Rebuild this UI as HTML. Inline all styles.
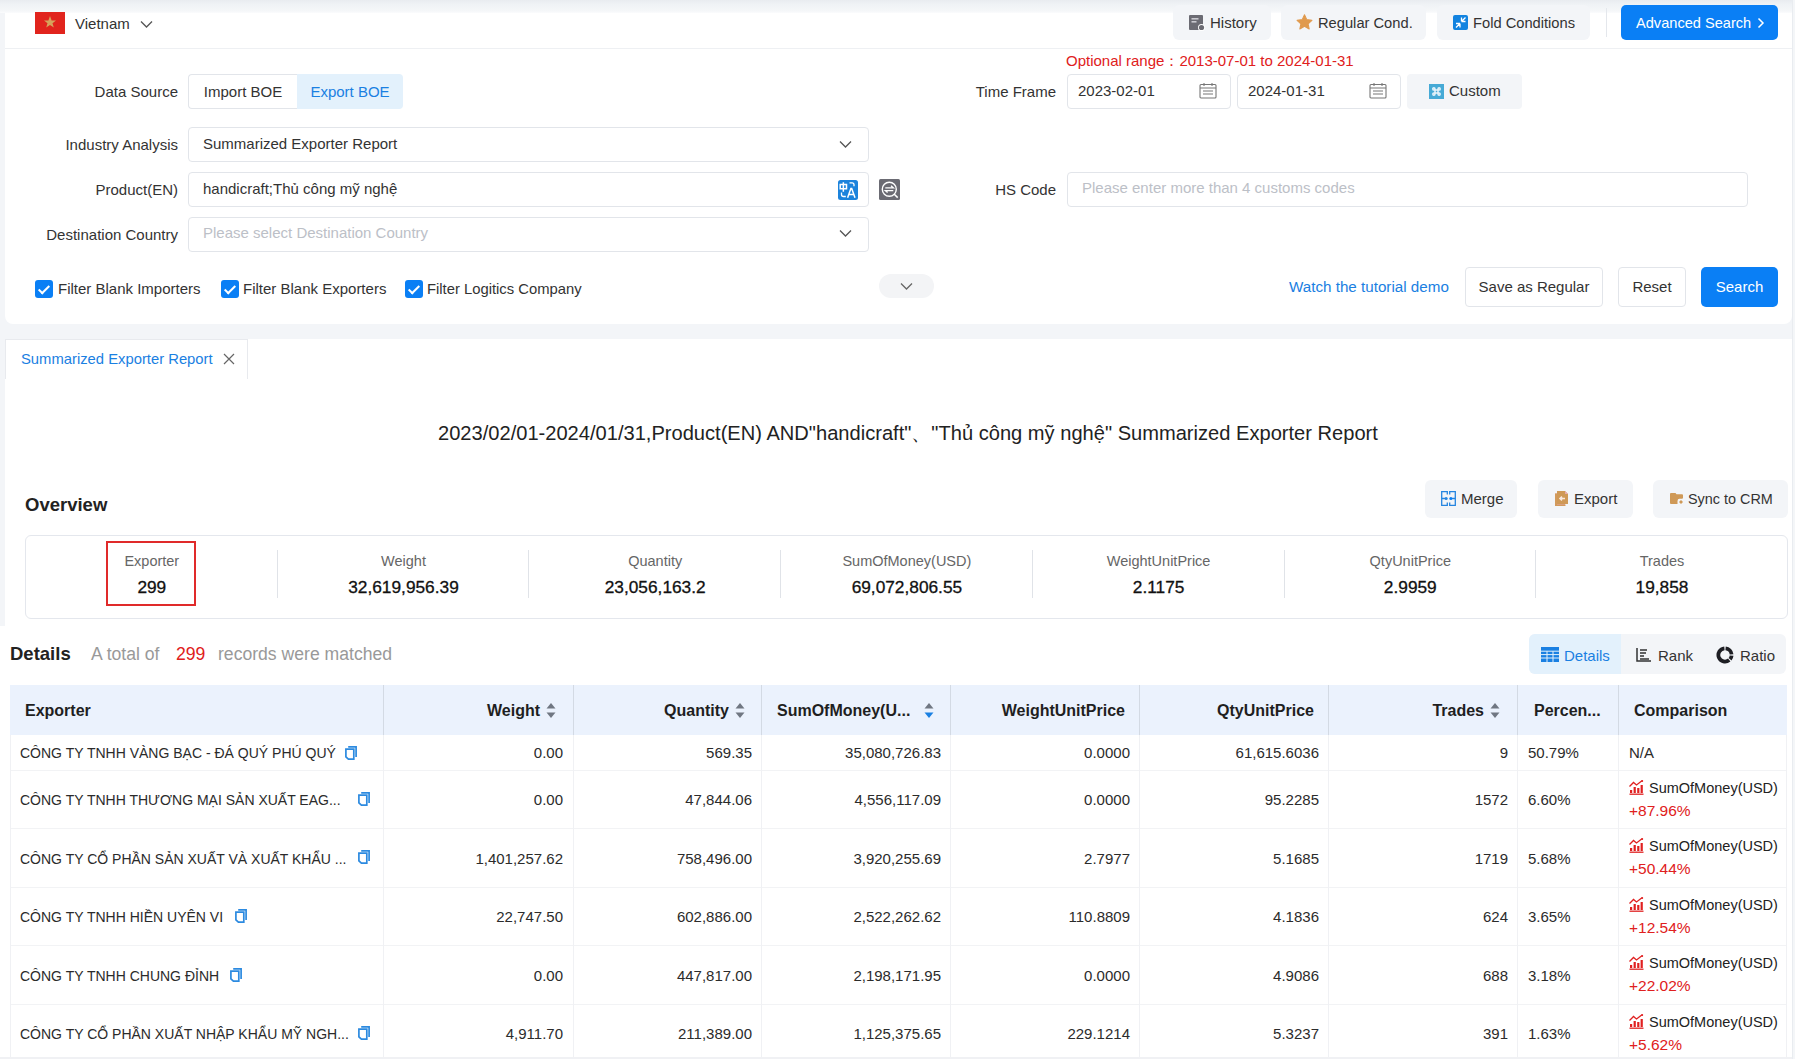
<!DOCTYPE html>
<html><head><meta charset="utf-8">
<style>
*{box-sizing:border-box;margin:0;padding:0}
html,body{width:1795px;height:1059px;overflow:hidden}
body{position:relative;background:#f3f5f8;font-family:"Liberation Sans",sans-serif;font-size:15px;color:#333}
.abs{position:absolute;white-space:nowrap}
.card1{position:absolute;left:5px;top:0;width:1787px;height:324px;background:#fff;border-radius:0 0 8px 8px}
.topshade{position:absolute;left:0;top:0;width:1792px;height:13px;background:linear-gradient(#e9ecf0 0px,#eff2f5 4px,#f5f7f9 11px,#fbfcfd 13px)}
.hline{position:absolute;left:5px;top:48px;width:1787px;height:1px;background:#eef0f3}
.gbtn{position:absolute;height:35px;top:5px;background:#f3f5f8;border-radius:6px}
.lbl{position:absolute;text-align:right;width:200px;line-height:20px;color:#333}
.inp{position:absolute;border:1px solid #e2e5ea;border-radius:4px;background:#fff;line-height:32px;padding-left:14px;color:#333;white-space:nowrap}
.ph{color:#bcc0c7;line-height:30.5px!important}
.cb{position:absolute;width:18px;height:18px;background:#0a7ff5;border-radius:3px;top:280px}
.cb::after{content:"";position:absolute;left:6px;top:2.5px;width:4px;height:9px;border-right:2px solid #fff;border-bottom:2px solid #fff;transform:rotate(45deg)}
.cbt{position:absolute;top:279px;line-height:20px;white-space:nowrap}
.wbtn{position:absolute;top:267px;height:40px;border:1px solid #e2e5ea;border-radius:4px;background:#fff;line-height:38px;text-align:center;color:#333}
.card2{position:absolute;left:5px;top:339px;width:1787px;height:288px;background:#fff}
.details{position:absolute;left:0;top:626px;width:1792px;height:433px;background:#fff}
.val{-webkit-text-stroke:0.3px #111}
</style></head>
<body>
<div class="card1"></div><div class="topshade"></div><div class="hline"></div>
<div class="card2"></div><div class="details"></div>
<div class="abs" style="left:1792px;top:0;width:3px;height:1059px;background:#f4f6f8"></div>
<div class="abs" style="left:1792px;top:0;width:1px;height:1059px;background:#e9ecf0"></div>
<div class="abs" style="left:35px;top:12px;width:30px;height:22px;background:#e1241d"></div>
<svg class="abs" style="left:43px;top:15px" width="14" height="14" viewBox="0 0 14 14"><polygon points="7,1 8.6,5.4 13,5.4 9.5,8.2 10.8,12.6 7,10 3.2,12.6 4.5,8.2 1,5.4 5.4,5.4" fill="#d6a35c"/></svg>
<div class="abs" style="left:75px;top:14px;line-height:20px;">Vietnam</div>
<svg class="abs" style="left:140px;top:20px" width="13" height="9" viewBox="0 0 13 9"><polyline points="1,1.5 6.5,7 12,1.5" fill="none" stroke="#555" stroke-width="1.3"/></svg>
<div class="gbtn" style="left:1173px;width:98px"></div>
<svg class="abs" style="left:1189px;top:15px" width="16" height="16" viewBox="0 0 16 16"><rect x="0" y="0" width="14" height="15" rx="1" fill="#6b6b73"/><rect x="2.5" y="3" width="7" height="1.6" fill="#c9c9cf"/><rect x="2.5" y="6" width="5" height="1.6" fill="#c9c9cf"/><circle cx="12.5" cy="12.5" r="3.5" fill="#fff"/><circle cx="12.5" cy="12.5" r="2.6" fill="#6b6b73"/></svg>
<div class="abs" style="left:1210px;top:13px;line-height:20px;">History</div>
<div class="gbtn" style="left:1281px;width:145px"></div>
<svg class="abs" style="left:1296px;top:14px" width="17" height="16" viewBox="0 0 24 23"><path d="M12 1.2l3.3 6.9 7.4.9-5.5 5.1 1.5 7.4L12 17.8l-6.7 3.7 1.5-7.4L1.3 9l7.4-.9z" fill="#e09a4e" stroke="#e09a4e" stroke-width="1.5" stroke-linejoin="round"/></svg>
<div class="abs" style="left:1318px;top:13px;line-height:20px;font-size:14.7px">Regular Cond.</div>
<div class="gbtn" style="left:1437px;width:153px"></div>
<svg class="abs" style="left:1453px;top:15px" width="15" height="15" viewBox="0 0 15 15"><rect width="15" height="15" rx="2" fill="#1283e0"/><path d="M8.5 6.5L12.5 2.5M8.5 6.5V2.5M8.5 6.5H12.5M7 8.5L3 12.5M7 8.5V12.5M7 8.5H3" stroke="#fff" stroke-width="1.3" fill="none"/></svg>
<div class="abs" style="left:1473px;top:13px;line-height:20px;font-size:14.7px">Fold Conditions</div>
<div class="abs" style="left:1606px;top:8px;width:1px;height:29px;background:#e4e7ec"></div>
<div class="abs" style="left:1621px;top:5px;width:157px;height:35px;background:#0a7ff5;border-radius:5px"></div>
<div class="abs" style="left:1636px;top:13px;line-height:20px;color:#fff;font-size:14.6px">Advanced Search</div>
<svg class="abs" style="left:1757px;top:17px" width="8" height="12" viewBox="0 0 8 12"><polyline points="1.5,1.5 6,6 1.5,10.5" fill="none" stroke="#fff" stroke-width="1.5"/></svg>
<div class="lbl" style="left:-22px;top:82px">Data Source</div>
<div class="abs" style="left:188px;top:74px;width:109px;height:35px;border:1px solid #e2e5ea;border-right:none;border-radius:4px 0 0 4px;line-height:33px;text-align:center">Import BOE</div>
<div class="abs" style="left:297px;top:74px;width:106px;height:35px;background:#e3f1fc;border-radius:0 4px 4px 0;line-height:35px;text-align:center;color:#1a80e2">Export BOE</div>
<div class="abs" style="left:1066px;top:51px;line-height:20px;color:#e02020">Optional range：2013-07-01 to 2024-01-31</div>
<div class="lbl" style="left:856px;top:82px">Time Frame</div>
<div class="inp" style="left:1067px;top:74px;width:164px;height:35px;padding-left:10px">2023-02-01</div>
<div class="inp" style="left:1237px;top:74px;width:164px;height:35px;padding-left:10px">2024-01-31</div>
<svg class="abs" style="left:1199px;top:83px" width="18" height="16" viewBox="0 0 18 16"><rect x="1" y="1.5" width="16" height="13.5" rx="1" fill="none" stroke="#777" stroke-width="1.1"/><path d="M1 5h16 M4 8h10 M4 11h10 M5 0v3 M13 0v3" stroke="#777" stroke-width="1.1"/></svg>
<svg class="abs" style="left:1369px;top:83px" width="18" height="16" viewBox="0 0 18 16"><rect x="1" y="1.5" width="16" height="13.5" rx="1" fill="none" stroke="#777" stroke-width="1.1"/><path d="M1 5h16 M4 8h10 M4 11h10 M5 0v3 M13 0v3" stroke="#777" stroke-width="1.1"/></svg>
<div class="abs" style="left:1407px;top:74px;width:115px;height:35px;background:#f3f5f8;border-radius:4px"></div>
<svg class="abs" style="left:1429px;top:84px" width="15" height="15" viewBox="0 0 15 15"><rect width="15" height="15" fill="#46aad6"/><path d="M6 6h3v3H6z M6 6V4.9A1.1 1.1 0 1 0 4.9 6H6 M9 6V4.9A1.1 1.1 0 1 1 10.1 6H9 M6 9V10.1A1.1 1.1 0 1 1 4.9 9H6 M9 9V10.1A1.1 1.1 0 1 0 10.1 9H9" fill="none" stroke="#e8f4fa" stroke-width="1.5"/></svg>
<div class="abs" style="left:1449px;top:81px;line-height:20px;">Custom</div>
<div class="lbl" style="left:-22px;top:135px">Industry Analysis</div>
<div class="inp" style="left:188px;top:127px;width:681px;height:35px">Summarized Exporter Report</div>
<svg class="abs" style="left:839px;top:140px" width="13" height="9" viewBox="0 0 13 9"><polyline points="1,1.5 6.5,7 12,1.5" fill="none" stroke="#555" stroke-width="1.3"/></svg>
<div class="lbl" style="left:-22px;top:180px">Product(EN)</div>
<div class="inp" style="left:188px;top:172px;width:681px;height:35px">handicraft;Thủ công mỹ nghệ</div>
<svg class="abs" style="left:838px;top:180px" width="20" height="20" viewBox="0 0 20 20"><rect width="20" height="20" rx="2.5" fill="#1c83dc"/><path d="M2.2 4.5h6.3v4.3H2.2z M5.35 2.2v9.6" fill="none" stroke="#fff" stroke-width="1.5"/><path d="M11.5 2.8h2.5a2 2 0 0 1 2 2v1.4 M3.5 12.5v2a2 2 0 0 0 2 2h2.3" fill="none" stroke="#fff" stroke-width="1.3"/><path d="M9.6 17.8L12.9 8.6h0.8l3.3 9.2 M11 14.6h4.6" fill="none" stroke="#fff" stroke-width="1.5"/></svg>
<svg class="abs" style="left:879px;top:179px" width="21" height="21" viewBox="0 0 21 21"><rect width="21" height="21" rx="1.5" fill="#6b6b73"/><circle cx="10.3" cy="10.2" r="7" fill="none" stroke="#fff" stroke-width="1.4"/><path d="M15.3 15.2l3.4 3.4" stroke="#fff" stroke-width="1.5"/><path d="M6.3 8.8h8l-2.3-2 M14.3 11.6h-8l2.3 2" fill="none" stroke="#fff" stroke-width="1.3"/></svg>
<div class="lbl" style="left:856px;top:180px">HS Code</div>
<div class="inp ph" style="left:1067px;top:172px;width:681px;height:35px">Please enter more than 4 customs codes</div>
<div class="lbl" style="left:-22px;top:225px">Destination Country</div>
<div class="inp ph" style="left:188px;top:217px;width:681px;height:35px">Please select Destination Country</div>
<svg class="abs" style="left:839px;top:229px" width="13" height="9" viewBox="0 0 13 9"><polyline points="1,1.5 6.5,7 12,1.5" fill="none" stroke="#555" stroke-width="1.3"/></svg>
<div class="cb" style="left:35px"></div><div class="cbt" style="left:58px">Filter Blank Importers</div>
<div class="cb" style="left:221px"></div><div class="cbt" style="left:243px">Filter Blank Exporters</div>
<div class="cb" style="left:405px"></div><div class="cbt" style="left:427px;font-size:14.8px">Filter Logitics Company</div>
<div class="abs" style="left:879px;top:274px;width:55px;height:24px;background:#f3f4f6;border-radius:12px"></div>
<svg class="abs" style="left:900px;top:282px" width="13" height="9" viewBox="0 0 13 9"><polyline points="1,1.5 6.5,7 12,1.5" fill="none" stroke="#666" stroke-width="1.3"/></svg>
<div class="abs" style="left:1289px;top:277px;line-height:20px;color:#1a80e2;font-size:15.2px">Watch the tutorial demo</div>
<div class="wbtn" style="left:1465px;width:138px">Save as Regular</div>
<div class="wbtn" style="left:1618px;width:68px">Reset</div>
<div class="abs" style="left:1701px;top:267px;width:77px;height:40px;background:#0a7ff5;border-radius:5px;color:#fff;text-align:center;line-height:40px">Search</div>
<div class="abs" style="left:5px;top:339px;width:243px;height:40px;border:1px solid #e8eaee;border-bottom:none;background:#fff"></div>
<div class="abs" style="left:21px;top:349px;line-height:20px;color:#1a80e2;font-size:14.8px">Summarized Exporter Report</div>
<svg class="abs" style="left:223px;top:353px" width="12" height="12" viewBox="0 0 12 12"><path d="M1 1L11 11M11 1L1 11" stroke="#666" stroke-width="1.2"/></svg>
<div class="abs" style="left:438px;top:420px;line-height:26px;font-size:20.1px;color:#222">2023/02/01-2024/01/31,Product(EN) AND"handicraft"、"Thủ công mỹ nghệ" Summarized Exporter Report</div>
<div class="abs" style="left:25px;top:493px;line-height:24px;font-size:18.5px;font-weight:bold;color:#222">Overview</div>
<div class="gbtn" style="left:1425px;top:480px;width:92px;height:38px"></div>
<svg class="abs" style="left:1441px;top:491px" width="15" height="15" viewBox="0 0 15 15"><path d="M6.3 3.6V0.7H0.7V14.3H6.3V11.4 M8.7 3.6V0.7H14.3V14.3H8.7V11.4 M0.7 7.5H5 M14.3 7.5H10" fill="none" stroke="#2585e0" stroke-width="1.3"/><circle cx="5.2" cy="7.5" r="1.5" fill="#2585e0"/><circle cx="9.8" cy="7.5" r="1.5" fill="#0a7ff5"/></svg>
<div class="abs" style="left:1461px;top:489px;line-height:20px;">Merge</div>
<div class="gbtn" style="left:1538px;top:480px;width:95px;height:38px"></div>
<svg class="abs" style="left:1555px;top:491px" width="13" height="15" viewBox="0 0 13 15"><path d="M0 2.5h2.5V13H10v2H0z" fill="#e3a4a4"/><path d="M0 2.5h2v11h8.5v1.5H0z" fill="#d29a5c"/><path d="M2 0H10l3 3V13H2z" fill="#cf9957"/><path d="M10 0l3 3h-3z" fill="#e8aab0"/><path d="M10 7.5H5M7 5.6L5 7.5 7 9.4" stroke="#f7e8e0" stroke-width="1.6" fill="none"/></svg>
<div class="abs" style="left:1574px;top:489px;line-height:20px;">Export</div>
<div class="gbtn" style="left:1653px;top:480px;width:135px;height:38px"></div>
<svg class="abs" style="left:1670px;top:493px" width="13" height="11" viewBox="0 0 13 11"><path d="M0 1Q0 0 1 0H5.5L6.5 1.2H12Q13 1.2 13 2.2V4.8Q13 5.8 12 5.8H9.5Q7.5 5.8 7.5 8V11H1Q0 11 0 10z" fill="#cf9957"/><path d="M11 7L13 9 11 11 9 9z" fill="#cf9957"/></svg>
<div class="abs" style="left:1688px;top:489px;line-height:20px;font-size:14.4px">Sync to CRM</div>
<div class="abs" style="left:25px;top:535px;width:1763px;height:84px;border:1px solid #e4e7ed;border-radius:6px"></div>
<div class="abs" style="left:106px;top:541px;width:90px;height:65px;border:2px solid #e02a2a"></div>
<div class="abs" style="left:31.8px;top:551px;width:240px;text-align:center;line-height:20px;font-size:14.5px;color:#666">Exporter</div>
<div class="abs val" style="left:31.8px;top:576px;width:240px;text-align:center;line-height:22px;font-size:17.3px;color:#111">299</div>
<div class="abs" style="left:283.5px;top:551px;width:240px;text-align:center;line-height:20px;font-size:14.5px;color:#666">Weight</div>
<div class="abs val" style="left:283.5px;top:576px;width:240px;text-align:center;line-height:22px;font-size:17.3px;color:#111">32,619,956.39</div>
<div class="abs" style="left:277px;top:550px;width:1px;height:48px;background:#e0e3e8"></div>
<div class="abs" style="left:535.2px;top:551px;width:240px;text-align:center;line-height:20px;font-size:14.5px;color:#666">Quantity</div>
<div class="abs val" style="left:535.2px;top:576px;width:240px;text-align:center;line-height:22px;font-size:17.3px;color:#111">23,056,163.2</div>
<div class="abs" style="left:528px;top:550px;width:1px;height:48px;background:#e0e3e8"></div>
<div class="abs" style="left:786.9px;top:551px;width:240px;text-align:center;line-height:20px;font-size:14.5px;color:#666">SumOfMoney(USD)</div>
<div class="abs val" style="left:786.9px;top:576px;width:240px;text-align:center;line-height:22px;font-size:17.3px;color:#111">69,072,806.55</div>
<div class="abs" style="left:780px;top:550px;width:1px;height:48px;background:#e0e3e8"></div>
<div class="abs" style="left:1038.6px;top:551px;width:240px;text-align:center;line-height:20px;font-size:14.5px;color:#666">WeightUnitPrice</div>
<div class="abs val" style="left:1038.6px;top:576px;width:240px;text-align:center;line-height:22px;font-size:17.3px;color:#111">2.1175</div>
<div class="abs" style="left:1032px;top:550px;width:1px;height:48px;background:#e0e3e8"></div>
<div class="abs" style="left:1290.3px;top:551px;width:240px;text-align:center;line-height:20px;font-size:14.5px;color:#666">QtyUnitPrice</div>
<div class="abs val" style="left:1290.3px;top:576px;width:240px;text-align:center;line-height:22px;font-size:17.3px;color:#111">2.9959</div>
<div class="abs" style="left:1284px;top:550px;width:1px;height:48px;background:#e0e3e8"></div>
<div class="abs" style="left:1542.0px;top:551px;width:240px;text-align:center;line-height:20px;font-size:14.5px;color:#666">Trades</div>
<div class="abs val" style="left:1542.0px;top:576px;width:240px;text-align:center;line-height:22px;font-size:17.3px;color:#111">19,858</div>
<div class="abs" style="left:1535px;top:550px;width:1px;height:48px;background:#e0e3e8"></div>
<div class="abs" style="left:10px;top:642px;line-height:24px;font-size:18.5px;font-weight:bold;color:#222">Details</div>
<div class="abs" style="left:91px;top:642px;line-height:24px;font-size:17.6px;color:#999">A total of</div>
<div class="abs" style="left:176px;top:642px;line-height:24px;font-size:17.6px;color:#e02020">299</div>
<div class="abs" style="left:218px;top:642px;line-height:24px;font-size:17.6px;color:#999">records were matched</div>
<div class="abs" style="left:1529px;top:634px;width:257px;height:40px;background:#f3f5f8;border-radius:6px"></div>
<div class="abs" style="left:1529px;top:634px;width:92px;height:40px;background:#e3f1fc;border-radius:6px 0 0 6px"></div>
<svg class="abs" style="left:1541px;top:647px" width="18" height="15" viewBox="0 0 18 15"><rect width="18" height="15" fill="#1a80e2"/><path d="M0 4.2h18M0 7.6h18M0 11h18M6 4.2v11M12 4.2v11" stroke="#e3f1fc" stroke-width="1"/></svg>
<div class="abs" style="left:1564px;top:646px;line-height:20px;color:#1a80e2">Details</div>
<svg class="abs" style="left:1636px;top:648px" width="15" height="14" viewBox="0 0 15 14"><path d="M1 0v13h14 M4 2h7 M4 5h6 M4 8h4 M4 11h9" stroke="#333" stroke-width="1.5" fill="none"/></svg>
<div class="abs" style="left:1658px;top:646px;line-height:20px;">Rank</div>
<svg class="abs" style="left:1716px;top:646px" width="18" height="18" viewBox="0 0 18 18"><path d="M9.58 2.43A6.60 6.60 0 0 1 15.57 8.42 M15.57 9.58A6.60 6.60 0 0 1 14.06 13.24 M13.24 14.06A6.60 6.60 0 1 1 8.42 2.43" fill="none" stroke="#1e1f24" stroke-width="3.8"/></svg>
<div class="abs" style="left:1740px;top:646px;line-height:20px;">Ratio</div>
<div class="abs" style="left:10px;top:685px;width:1777px;height:50px;background:#ebf2fd"></div>
<div class="abs" style="left:383px;top:685px;width:1px;height:50px;background:#d3dae4"></div>
<div class="abs" style="left:573px;top:685px;width:1px;height:50px;background:#d3dae4"></div>
<div class="abs" style="left:761px;top:685px;width:1px;height:50px;background:#d3dae4"></div>
<div class="abs" style="left:950px;top:685px;width:1px;height:50px;background:#d3dae4"></div>
<div class="abs" style="left:1139px;top:685px;width:1px;height:50px;background:#d3dae4"></div>
<div class="abs" style="left:1328px;top:685px;width:1px;height:50px;background:#d3dae4"></div>
<div class="abs" style="left:1517px;top:685px;width:1px;height:50px;background:#d3dae4"></div>
<div class="abs" style="left:1618px;top:685px;width:1px;height:50px;background:#d3dae4"></div>
<div class="abs" style="top:701px;line-height:20px;font-size:16px;font-weight:bold;color:#1f1f1f;left:25px">Exporter</div>
<div class="abs" style="top:701px;line-height:20px;font-size:16px;font-weight:bold;color:#1f1f1f;right:1255px">Weight</div><svg class="abs" style="left:546px;top:702px" width="10" height="17" viewBox="0 0 10 17"><path d="M5 1L9.5 6.5H0.5z" fill="#707782"/><path d="M5 16L9.5 10.5H0.5z" fill="#707782"/></svg>
<div class="abs" style="top:701px;line-height:20px;font-size:16px;font-weight:bold;color:#1f1f1f;right:1066px">Quantity</div><svg class="abs" style="left:735px;top:702px" width="10" height="17" viewBox="0 0 10 17"><path d="M5 1L9.5 6.5H0.5z" fill="#707782"/><path d="M5 16L9.5 10.5H0.5z" fill="#707782"/></svg>
<div class="abs" style="top:701px;line-height:20px;font-size:16px;font-weight:bold;color:#1f1f1f;left:777px">SumOfMoney(U...</div><svg class="abs" style="left:924px;top:702px" width="10" height="17" viewBox="0 0 10 17"><path d="M5 1L9.5 6.5H0.5z" fill="#707782"/><path d="M5 16L9.5 10.5H0.5z" fill="#1a80e2"/></svg>
<div class="abs" style="top:701px;line-height:20px;font-size:16px;font-weight:bold;color:#1f1f1f;right:670px">WeightUnitPrice</div>
<div class="abs" style="top:701px;line-height:20px;font-size:16px;font-weight:bold;color:#1f1f1f;right:481px">QtyUnitPrice</div>
<div class="abs" style="top:701px;line-height:20px;font-size:16px;font-weight:bold;color:#1f1f1f;right:311px">Trades</div><svg class="abs" style="left:1490px;top:702px" width="10" height="17" viewBox="0 0 10 17"><path d="M5 1L9.5 6.5H0.5z" fill="#707782"/><path d="M5 16L9.5 10.5H0.5z" fill="#707782"/></svg>
<div class="abs" style="top:701px;line-height:20px;font-size:16px;font-weight:bold;color:#1f1f1f;left:1534px">Percen...</div>
<div class="abs" style="top:701px;line-height:20px;font-size:16px;font-weight:bold;color:#1f1f1f;left:1634px">Comparison</div>
<div class="abs" style="top:743.0px;line-height:20px;font-size:15px;color:#2b2b2b;left:20px;font-size:14px">CÔNG TY TNHH VÀNG BẠC - ĐÁ QUÝ PHÚ QUÝ</div>
<svg class="abs" style="left:345px;top:746px" width="12" height="14" viewBox="0 0 12 14"><path d="M3.2 0.9h7.9v10" fill="none" stroke="#2c8ae0" stroke-width="1.7"/><path d="M0.9 3.1h7.9v10H3.4L0.9 10.8z" fill="none" stroke="#2c8ae0" stroke-width="1.7"/></svg>
<div class="abs" style="top:743.0px;line-height:20px;font-size:15px;color:#2b2b2b;right:1232px">0.00</div>
<div class="abs" style="top:743.0px;line-height:20px;font-size:15px;color:#2b2b2b;right:1043px">569.35</div>
<div class="abs" style="top:743.0px;line-height:20px;font-size:15px;color:#2b2b2b;right:854px">35,080,726.83</div>
<div class="abs" style="top:743.0px;line-height:20px;font-size:15px;color:#2b2b2b;right:665px">0.0000</div>
<div class="abs" style="top:743.0px;line-height:20px;font-size:15px;color:#2b2b2b;right:476px">61,615.6036</div>
<div class="abs" style="top:743.0px;line-height:20px;font-size:15px;color:#2b2b2b;right:287px">9</div>
<div class="abs" style="top:743.0px;line-height:20px;font-size:15px;color:#2b2b2b;left:1528px">50.79%</div>
<div class="abs" style="top:743.0px;line-height:20px;font-size:15px;color:#2b2b2b;left:1629px">N/A</div>
<div class="abs" style="left:10px;top:770.0px;width:1777px;height:1px;background:#f2f3f5"></div>
<div class="abs" style="top:790.2px;line-height:20px;font-size:15px;color:#2b2b2b;left:20px;font-size:14px">CÔNG TY TNHH THƯƠNG MẠI SẢN XUẤT EAG...</div>
<svg class="abs" style="left:358px;top:792px" width="12" height="14" viewBox="0 0 12 14"><path d="M3.2 0.9h7.9v10" fill="none" stroke="#2c8ae0" stroke-width="1.7"/><path d="M0.9 3.1h7.9v10H3.4L0.9 10.8z" fill="none" stroke="#2c8ae0" stroke-width="1.7"/></svg>
<div class="abs" style="top:790.2px;line-height:20px;font-size:15px;color:#2b2b2b;right:1232px">0.00</div>
<div class="abs" style="top:790.2px;line-height:20px;font-size:15px;color:#2b2b2b;right:1043px">47,844.06</div>
<div class="abs" style="top:790.2px;line-height:20px;font-size:15px;color:#2b2b2b;right:854px">4,556,117.09</div>
<div class="abs" style="top:790.2px;line-height:20px;font-size:15px;color:#2b2b2b;right:665px">0.0000</div>
<div class="abs" style="top:790.2px;line-height:20px;font-size:15px;color:#2b2b2b;right:476px">95.2285</div>
<div class="abs" style="top:790.2px;line-height:20px;font-size:15px;color:#2b2b2b;right:287px">1572</div>
<div class="abs" style="top:790.2px;line-height:20px;font-size:15px;color:#2b2b2b;left:1528px">6.60%</div>
<svg class="abs" style="left:1629px;top:780px" width="15" height="15" viewBox="0 0 15 15"><path d="M0.5 6.5L4.5 2.5L7.5 5L13 0.8" fill="none" stroke="#e02020" stroke-width="1.3"/><circle cx="13.2" cy="1" r="1" fill="#e02020"/><rect x="1" y="10" width="2.2" height="3" fill="#e02020"/><rect x="4.6" y="7" width="2.2" height="6" fill="#e02020"/><rect x="8.2" y="8" width="2.2" height="5" fill="#e02020"/><rect x="11.6" y="5" width="2.2" height="8" fill="#e02020"/><path d="M0.5 14.2h14" stroke="#e02020" stroke-width="1.3"/></svg>
<div class="abs" style="top:778.0px;left:1649px;line-height:20px;font-size:14.5px;color:#222">SumOfMoney(USD)</div>
<div class="abs" style="top:801.0px;left:1629px;line-height:20px;font-size:15.5px;color:#e02020">+87.96%</div>
<div class="abs" style="left:10px;top:828.0px;width:1777px;height:1px;background:#f2f3f5"></div>
<div class="abs" style="top:848.7px;line-height:20px;font-size:15px;color:#2b2b2b;left:20px;font-size:14px">CÔNG TY CỔ PHẦN SẢN XUẤT VÀ XUẤT KHẨU ...</div>
<svg class="abs" style="left:358px;top:850px" width="12" height="14" viewBox="0 0 12 14"><path d="M3.2 0.9h7.9v10" fill="none" stroke="#2c8ae0" stroke-width="1.7"/><path d="M0.9 3.1h7.9v10H3.4L0.9 10.8z" fill="none" stroke="#2c8ae0" stroke-width="1.7"/></svg>
<div class="abs" style="top:848.7px;line-height:20px;font-size:15px;color:#2b2b2b;right:1232px">1,401,257.62</div>
<div class="abs" style="top:848.7px;line-height:20px;font-size:15px;color:#2b2b2b;right:1043px">758,496.00</div>
<div class="abs" style="top:848.7px;line-height:20px;font-size:15px;color:#2b2b2b;right:854px">3,920,255.69</div>
<div class="abs" style="top:848.7px;line-height:20px;font-size:15px;color:#2b2b2b;right:665px">2.7977</div>
<div class="abs" style="top:848.7px;line-height:20px;font-size:15px;color:#2b2b2b;right:476px">5.1685</div>
<div class="abs" style="top:848.7px;line-height:20px;font-size:15px;color:#2b2b2b;right:287px">1719</div>
<div class="abs" style="top:848.7px;line-height:20px;font-size:15px;color:#2b2b2b;left:1528px">5.68%</div>
<svg class="abs" style="left:1629px;top:838px" width="15" height="15" viewBox="0 0 15 15"><path d="M0.5 6.5L4.5 2.5L7.5 5L13 0.8" fill="none" stroke="#e02020" stroke-width="1.3"/><circle cx="13.2" cy="1" r="1" fill="#e02020"/><rect x="1" y="10" width="2.2" height="3" fill="#e02020"/><rect x="4.6" y="7" width="2.2" height="6" fill="#e02020"/><rect x="8.2" y="8" width="2.2" height="5" fill="#e02020"/><rect x="11.6" y="5" width="2.2" height="8" fill="#e02020"/><path d="M0.5 14.2h14" stroke="#e02020" stroke-width="1.3"/></svg>
<div class="abs" style="top:836.0px;left:1649px;line-height:20px;font-size:14.5px;color:#222">SumOfMoney(USD)</div>
<div class="abs" style="top:859.0px;left:1629px;line-height:20px;font-size:15.5px;color:#e02020">+50.44%</div>
<div class="abs" style="left:10px;top:887.0px;width:1777px;height:1px;background:#f2f3f5"></div>
<div class="abs" style="top:907.2px;line-height:20px;font-size:15px;color:#2b2b2b;left:20px;font-size:14px">CÔNG TY TNHH HIỀN UYÊN VI</div>
<svg class="abs" style="left:235px;top:909px" width="12" height="14" viewBox="0 0 12 14"><path d="M3.2 0.9h7.9v10" fill="none" stroke="#2c8ae0" stroke-width="1.7"/><path d="M0.9 3.1h7.9v10H3.4L0.9 10.8z" fill="none" stroke="#2c8ae0" stroke-width="1.7"/></svg>
<div class="abs" style="top:907.2px;line-height:20px;font-size:15px;color:#2b2b2b;right:1232px">22,747.50</div>
<div class="abs" style="top:907.2px;line-height:20px;font-size:15px;color:#2b2b2b;right:1043px">602,886.00</div>
<div class="abs" style="top:907.2px;line-height:20px;font-size:15px;color:#2b2b2b;right:854px">2,522,262.62</div>
<div class="abs" style="top:907.2px;line-height:20px;font-size:15px;color:#2b2b2b;right:665px">110.8809</div>
<div class="abs" style="top:907.2px;line-height:20px;font-size:15px;color:#2b2b2b;right:476px">4.1836</div>
<div class="abs" style="top:907.2px;line-height:20px;font-size:15px;color:#2b2b2b;right:287px">624</div>
<div class="abs" style="top:907.2px;line-height:20px;font-size:15px;color:#2b2b2b;left:1528px">3.65%</div>
<svg class="abs" style="left:1629px;top:897px" width="15" height="15" viewBox="0 0 15 15"><path d="M0.5 6.5L4.5 2.5L7.5 5L13 0.8" fill="none" stroke="#e02020" stroke-width="1.3"/><circle cx="13.2" cy="1" r="1" fill="#e02020"/><rect x="1" y="10" width="2.2" height="3" fill="#e02020"/><rect x="4.6" y="7" width="2.2" height="6" fill="#e02020"/><rect x="8.2" y="8" width="2.2" height="5" fill="#e02020"/><rect x="11.6" y="5" width="2.2" height="8" fill="#e02020"/><path d="M0.5 14.2h14" stroke="#e02020" stroke-width="1.3"/></svg>
<div class="abs" style="top:895.0px;left:1649px;line-height:20px;font-size:14.5px;color:#222">SumOfMoney(USD)</div>
<div class="abs" style="top:918.0px;left:1629px;line-height:20px;font-size:15.5px;color:#e02020">+12.54%</div>
<div class="abs" style="left:10px;top:945.0px;width:1777px;height:1px;background:#f2f3f5"></div>
<div class="abs" style="top:965.7px;line-height:20px;font-size:15px;color:#2b2b2b;left:20px;font-size:14px">CÔNG TY TNHH CHUNG ĐỈNH</div>
<svg class="abs" style="left:230px;top:968px" width="12" height="14" viewBox="0 0 12 14"><path d="M3.2 0.9h7.9v10" fill="none" stroke="#2c8ae0" stroke-width="1.7"/><path d="M0.9 3.1h7.9v10H3.4L0.9 10.8z" fill="none" stroke="#2c8ae0" stroke-width="1.7"/></svg>
<div class="abs" style="top:965.7px;line-height:20px;font-size:15px;color:#2b2b2b;right:1232px">0.00</div>
<div class="abs" style="top:965.7px;line-height:20px;font-size:15px;color:#2b2b2b;right:1043px">447,817.00</div>
<div class="abs" style="top:965.7px;line-height:20px;font-size:15px;color:#2b2b2b;right:854px">2,198,171.95</div>
<div class="abs" style="top:965.7px;line-height:20px;font-size:15px;color:#2b2b2b;right:665px">0.0000</div>
<div class="abs" style="top:965.7px;line-height:20px;font-size:15px;color:#2b2b2b;right:476px">4.9086</div>
<div class="abs" style="top:965.7px;line-height:20px;font-size:15px;color:#2b2b2b;right:287px">688</div>
<div class="abs" style="top:965.7px;line-height:20px;font-size:15px;color:#2b2b2b;left:1528px">3.18%</div>
<svg class="abs" style="left:1629px;top:955px" width="15" height="15" viewBox="0 0 15 15"><path d="M0.5 6.5L4.5 2.5L7.5 5L13 0.8" fill="none" stroke="#e02020" stroke-width="1.3"/><circle cx="13.2" cy="1" r="1" fill="#e02020"/><rect x="1" y="10" width="2.2" height="3" fill="#e02020"/><rect x="4.6" y="7" width="2.2" height="6" fill="#e02020"/><rect x="8.2" y="8" width="2.2" height="5" fill="#e02020"/><rect x="11.6" y="5" width="2.2" height="8" fill="#e02020"/><path d="M0.5 14.2h14" stroke="#e02020" stroke-width="1.3"/></svg>
<div class="abs" style="top:953.0px;left:1649px;line-height:20px;font-size:14.5px;color:#222">SumOfMoney(USD)</div>
<div class="abs" style="top:976.0px;left:1629px;line-height:20px;font-size:15.5px;color:#e02020">+22.02%</div>
<div class="abs" style="left:10px;top:1004.0px;width:1777px;height:1px;background:#f2f3f5"></div>
<div class="abs" style="top:1024.2px;line-height:20px;font-size:15px;color:#2b2b2b;left:20px;font-size:14px">CÔNG TY CỔ PHẦN XUẤT NHẬP KHẨU MỸ NGH...</div>
<svg class="abs" style="left:358px;top:1026px" width="12" height="14" viewBox="0 0 12 14"><path d="M3.2 0.9h7.9v10" fill="none" stroke="#2c8ae0" stroke-width="1.7"/><path d="M0.9 3.1h7.9v10H3.4L0.9 10.8z" fill="none" stroke="#2c8ae0" stroke-width="1.7"/></svg>
<div class="abs" style="top:1024.2px;line-height:20px;font-size:15px;color:#2b2b2b;right:1232px">4,911.70</div>
<div class="abs" style="top:1024.2px;line-height:20px;font-size:15px;color:#2b2b2b;right:1043px">211,389.00</div>
<div class="abs" style="top:1024.2px;line-height:20px;font-size:15px;color:#2b2b2b;right:854px">1,125,375.65</div>
<div class="abs" style="top:1024.2px;line-height:20px;font-size:15px;color:#2b2b2b;right:665px">229.1214</div>
<div class="abs" style="top:1024.2px;line-height:20px;font-size:15px;color:#2b2b2b;right:476px">5.3237</div>
<div class="abs" style="top:1024.2px;line-height:20px;font-size:15px;color:#2b2b2b;right:287px">391</div>
<div class="abs" style="top:1024.2px;line-height:20px;font-size:15px;color:#2b2b2b;left:1528px">1.63%</div>
<svg class="abs" style="left:1629px;top:1014px" width="15" height="15" viewBox="0 0 15 15"><path d="M0.5 6.5L4.5 2.5L7.5 5L13 0.8" fill="none" stroke="#e02020" stroke-width="1.3"/><circle cx="13.2" cy="1" r="1" fill="#e02020"/><rect x="1" y="10" width="2.2" height="3" fill="#e02020"/><rect x="4.6" y="7" width="2.2" height="6" fill="#e02020"/><rect x="8.2" y="8" width="2.2" height="5" fill="#e02020"/><rect x="11.6" y="5" width="2.2" height="8" fill="#e02020"/><path d="M0.5 14.2h14" stroke="#e02020" stroke-width="1.3"/></svg>
<div class="abs" style="top:1012.0px;left:1649px;line-height:20px;font-size:14.5px;color:#222">SumOfMoney(USD)</div>
<div class="abs" style="top:1035.0px;left:1629px;line-height:20px;font-size:15.5px;color:#e02020">+5.62%</div>
<div class="abs" style="left:10px;top:735px;width:1px;height:324px;background:#f0f1f4"></div>
<div class="abs" style="left:383px;top:735px;width:1px;height:324px;background:#f0f1f4"></div>
<div class="abs" style="left:573px;top:735px;width:1px;height:324px;background:#f0f1f4"></div>
<div class="abs" style="left:761px;top:735px;width:1px;height:324px;background:#f0f1f4"></div>
<div class="abs" style="left:950px;top:735px;width:1px;height:324px;background:#f0f1f4"></div>
<div class="abs" style="left:1139px;top:735px;width:1px;height:324px;background:#f0f1f4"></div>
<div class="abs" style="left:1328px;top:735px;width:1px;height:324px;background:#f0f1f4"></div>
<div class="abs" style="left:1517px;top:735px;width:1px;height:324px;background:#f0f1f4"></div>
<div class="abs" style="left:1618px;top:735px;width:1px;height:324px;background:#f0f1f4"></div>
<div class="abs" style="left:1786px;top:735px;width:1px;height:324px;background:#f0f1f4"></div>
<div class="abs" style="left:0;top:1057px;width:1792px;height:2px;background:#f0f1f4"></div>
</body></html>
